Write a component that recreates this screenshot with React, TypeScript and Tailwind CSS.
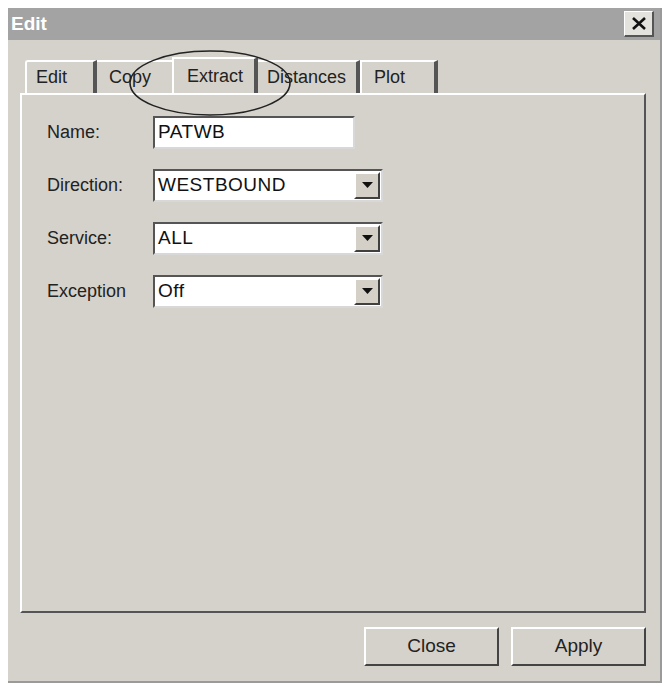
import React from "react";

const Arrow = () => (
  <div className="w-[26px] h-full bg-[#d4d0c8] border-t-2 border-l-2 border-t-white border-l-white border-b-2 border-r-2 border-b-[#404040] border-r-[#404040] flex items-center justify-center">
    <svg width="11" height="7" viewBox="0 0 11 7"><polygon points="0,0 11,0 5.5,6" fill="#111" /></svg>
  </div>
);

const Field = ({ label, value, select, width }: { label: string; value: string; select?: boolean; width: string }) => (
  <div className="flex items-center h-[33px]">
    <div className="w-[106px] text-[18px] text-[#222]">{label}</div>
    <div className={`${width} h-[33px] bg-white border-t-2 border-l-2 border-t-[#555] border-l-[#555] border-b-2 border-r-2 border-b-[#d8d8d8] border-r-[#d8d8d8] flex items-center ${select ? "pr-[1px]" : ""}`}>
      <div className="flex-1 pl-[3px] text-[19px] text-[#111] tracking-[0.5px]">{value}</div>
      {select && <div className="h-[27px] py-0"><Arrow /></div>}
    </div>
  </div>
);

export default function App() {
  return (
    <div className="w-[666px] h-[687px] bg-white pt-[8px] pl-[8px]" style={{ fontFamily: '"Liberation Sans", Arial, sans-serif' }}>
      <div className="w-[654px] h-[675px] bg-[#d5d2cb] border-r-2 border-b-2 border-[#9a9a9a] flex flex-col">
        <div className="h-[32px] bg-[#a3a3a3] flex items-center justify-between pl-[3px] pr-[6px]">
          <span className="text-white font-bold text-[19px]">Edit</span>
          <div className="w-[30px] h-[26px] bg-[#e4e2dc] border-t border-l border-white border-b-2 border-r-2 border-b-[#555] border-r-[#555] flex items-center justify-center">
            <svg width="14" height="13" viewBox="0 0 14 13"><path d="M1 1 L13 12 M13 1 L1 12" stroke="#111" strokeWidth="2.6" /></svg>
          </div>
        </div>
        <div className="relative flex-1 flex flex-col px-[12px]">
          <div className="flex items-end h-[53px] pl-[5px]">
            <div className="h-[33px] w-[72px] border-t-2 border-l-2 border-white border-r-4 border-r-[#555] rounded-tl-[3px] flex items-center pl-[9px] text-[18px] text-[#222]">Edit</div>
            <div className="h-[33px] w-[75px] border-t-2 border-white flex items-center pl-[12px] text-[18px] text-[#222]">Copy</div>
            <div className="h-[36px] w-[86px] border-t-2 border-l-2 border-white border-r-4 border-r-[#555] flex items-start pt-[4px] pl-[13px] text-[18px] text-[#222] bg-[#d5d2cb]">Extract</div>
            <div className="h-[33px] w-[102px] border-t-2 border-white border-r-4 border-r-[#555] flex items-center pl-[9px] text-[18px] text-[#222]">Distances</div>
            <div className="h-[33px] w-[78px] border-t-2 border-l-2 border-white border-r-4 border-r-[#555] flex items-center pl-[12px] text-[18px] text-[#222]">Plot</div>
          </div>
          <div className="h-[520px] w-[626px] border-l-2 border-t-2 border-white border-r-2 border-b-2 border-r-[#555] border-b-[#555] pt-[21px] pl-[25px] flex flex-col gap-[20px]">
            <Field label="Name:" value="PATWB" width="w-[202px]" />
            <Field label="Direction:" value="WESTBOUND" select width="w-[230px]" />
            <Field label="Service:" value="ALL" select width="w-[230px]" />
            <Field label="Exception" value="Off" select width="w-[230px]" />
          </div>
          <div className="flex justify-end gap-[12px] pr-[2px] pt-[14px]">
            {["Close", "Apply"].map((t) => (
              <div key={t} className="w-[135px] h-[39px] border-t-2 border-l-2 border-white border-r-2 border-b-2 border-r-[#444] border-b-[#444] flex items-center justify-center text-[19px] text-[#222]">{t}</div>
            ))}
          </div>
          <svg className="absolute left-[120px] top-[9px] pointer-events-none" width="164" height="68" viewBox="0 0 164 68">
            <ellipse cx="82" cy="34" rx="80" ry="32" fill="none" stroke="#222" strokeWidth="1.6" />
          </svg>
        </div>
      </div>
    </div>
  );
}
